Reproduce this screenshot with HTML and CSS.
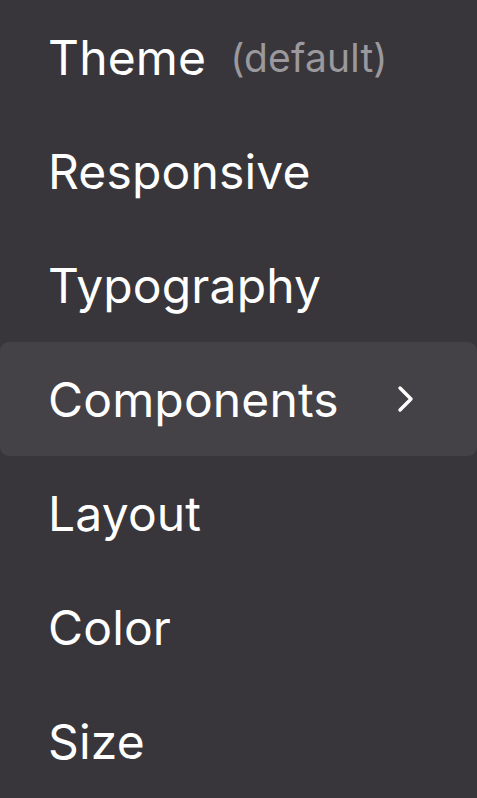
FILE: index.html
```html
<!DOCTYPE html>
<html lang="en">
<head>
    <meta charset="UTF-8">
    <meta name="viewport" content="width=device-width, initial-scale=1.0">
    <title>Menu</title>
    <link rel="stylesheet" href="styles.css">
</head>
<body>
    <ul class="menu">
        <li class="item">Theme <span class="hint">(default)</span></li>
        <li class="item">Responsive</li>
        <li class="item">Typography</li>
        <li class="item active">
            Components
            <svg class="chevron" width="18" height="28" viewBox="0 0 18 28">
                <path d="M3 3 L14 14 L3 25" fill="none" stroke="#fff" stroke-width="3.4" stroke-linecap="round" stroke-linejoin="round"/>
            </svg>
        </li>
        <li class="item">Layout</li>
        <li class="item">Color</li>
        <li class="item">Size</li>
    </ul>
</body>
</html>
```

FILE: styles.css
```css
body {
    margin: 0;
    padding: 0;
    background-color: #38363a;
    font-family: Inter, "Noto Sans", sans-serif;
    color: #ffffff;
}

.menu {
    list-style: none;
    margin: 0;
    padding: 0;
}

.item {
    height: 114px;
    display: flex;
    align-items: center;
    padding-left: 48px;
    font-size: 48px;
    font-weight: 400;
    letter-spacing: 0.15px;
    border-radius: 9px;
}

.active {
    background-color: #444246;
}

.hint {
    color: #9b999d;
    margin-left: 24px;
    font-size: 39px;
}

.chevron {
    margin-left: 58px;
}
```
